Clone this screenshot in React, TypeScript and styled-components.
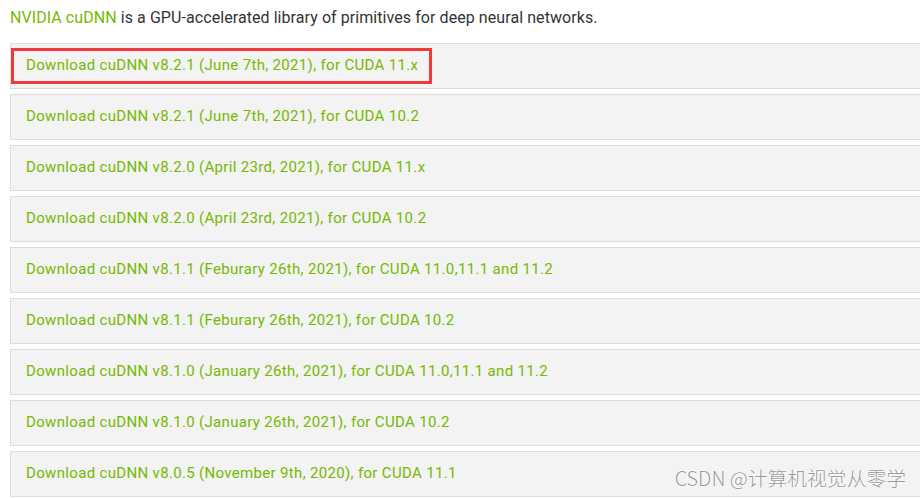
import React from "react";
import styled, { createGlobalStyle } from "styled-components";

const Global = createGlobalStyle`
  html, body { margin: 0; padding: 0; background: #fff; overflow: hidden; }
  body { width: 920px; height: 498px; }
`;

const Page = styled.div`
  position: relative;
  width: 920px;
  height: 498px;
  overflow: hidden;
  font-family: "Roboto", "Liberation Sans", sans-serif;
  padding: 7px 0 0 10px;
  box-sizing: border-box;
`;

const Intro = styled.p`
  margin: 0 0 14px 0;
  font-size: 16px;
  line-height: 22px;
  letter-spacing: 0.07px;
  color: #333;
  white-space: nowrap;
`;

const Brand = styled.span`
  color: #76b900;
`;

const List = styled.div`
  display: flex;
  flex-direction: column;
  gap: 5px;
  width: 940px;
`;

const Row = styled.div`
  height: 46px;
  box-sizing: border-box;
  border: 1px solid #dcdcdc;
  background: #f3f3f3;
  display: flex;
  align-items: center;
`;

const Link = styled.a<{ $highlight?: boolean }>`
  display: inline-flex;
  align-items: center;
  height: 36px;
  box-sizing: border-box;
  padding: 0 11px 2px 12px;
  border: 3px solid ${(p) => (p.$highlight ? "#f0393a" : "transparent")};
  color: #76b900;
  font-size: 15px;
  letter-spacing: 0.33px;
  text-decoration: none;
  white-space: nowrap;
`;

const Watermark = styled.div`
  position: absolute;
  right: 14px;
  bottom: 6px;
  font-family: "Noto Sans CJK SC", sans-serif;
  font-size: 19.8px;
  font-weight: 300;
  color: #9a9a9a;
  text-shadow: 0 0 2px #fff, 0 0 2px #fff;
  white-space: nowrap;
`;

const items = [
  "Download cuDNN v8.2.1 (June 7th, 2021), for CUDA 11.x",
  "Download cuDNN v8.2.1 (June 7th, 2021), for CUDA 10.2",
  "Download cuDNN v8.2.0 (April 23rd, 2021), for CUDA 11.x",
  "Download cuDNN v8.2.0 (April 23rd, 2021), for CUDA 10.2",
  "Download cuDNN v8.1.1 (Feburary 26th, 2021), for CUDA 11.0,11.1 and 11.2",
  "Download cuDNN v8.1.1 (Feburary 26th, 2021), for CUDA 10.2",
  "Download cuDNN v8.1.0 (January 26th, 2021), for CUDA 11.0,11.1 and 11.2",
  "Download cuDNN v8.1.0 (January 26th, 2021), for CUDA 10.2",
  "Download cuDNN v8.0.5 (November 9th, 2020), for CUDA 11.1",
];

export default function App() {
  return (
    <>
      <Global />
      <Page>
        <Intro>
          <Brand>NVIDIA cuDNN</Brand> is a GPU-accelerated library of primitives for deep neural networks.
        </Intro>
        <List>
          {items.map((t, i) => (
            <Row key={i}>
              <Link $highlight={i === 0}>{t}</Link>
            </Row>
          ))}
        </List>
        <Watermark>CSDN @计算机视觉从零学</Watermark>
      </Page>
    </>
  );
}
